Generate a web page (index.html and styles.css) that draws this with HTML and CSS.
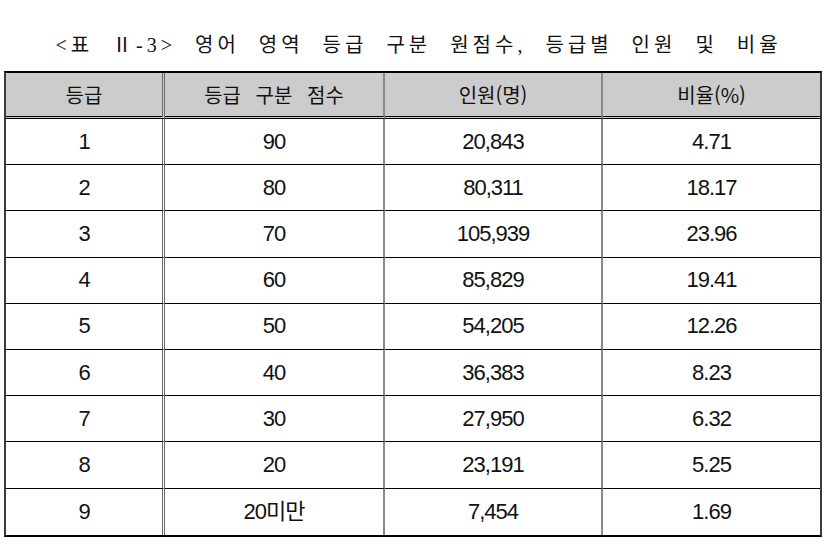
FILE: index.html
```html
<!DOCTYPE html>
<html lang="ko">
<head>
<meta charset="utf-8">
<title>영어 영역 등급 구분 원점수</title>
<link rel="stylesheet" href="styles.css">
</head>
<body>
<div class="page">
  <h1 class="caption">&lt;표 Ⅱ-3&gt; 영어 영역 등급 구분 원점수, 등급별 인원 및 비율</h1>
  <table class="grade-table">
    <colgroup>
      <col class="c1"><col class="c2"><col class="c3"><col class="c4">
    </colgroup>
    <thead>
      <tr>
        <th class="col-a">등급</th>
        <th class="col-b">등급 구분 점수</th>
        <th class="col-c">인원(명)</th>
        <th class="col-d">비율(%)</th>
      </tr>
    </thead>
    <tbody>
      <tr><td class="col-a">1</td><td class="col-b">90</td><td class="col-c">20,843</td><td class="col-d">4.71</td></tr>
      <tr><td class="col-a">2</td><td class="col-b">80</td><td class="col-c">80,311</td><td class="col-d">18.17</td></tr>
      <tr><td class="col-a">3</td><td class="col-b">70</td><td class="col-c">105,939</td><td class="col-d">23.96</td></tr>
      <tr><td class="col-a">4</td><td class="col-b">60</td><td class="col-c">85,829</td><td class="col-d">19.41</td></tr>
      <tr><td class="col-a">5</td><td class="col-b">50</td><td class="col-c">54,205</td><td class="col-d">12.26</td></tr>
      <tr><td class="col-a">6</td><td class="col-b">40</td><td class="col-c">36,383</td><td class="col-d">8.23</td></tr>
      <tr><td class="col-a">7</td><td class="col-b">30</td><td class="col-c">27,950</td><td class="col-d">6.32</td></tr>
      <tr><td class="col-a">8</td><td class="col-b">20</td><td class="col-c">23,191</td><td class="col-d">5.25</td></tr>
      <tr class="last"><td class="col-a">9</td><td class="col-b">20미만</td><td class="col-c">7,454</td><td class="col-d">1.69</td></tr>
    </tbody>
  </table>
</div>
</body>
</html>
```
FILE: styles.css
```css
html, body {
  margin: 0;
  padding: 0;
  background: #ffffff;
}

.page {
  width: 837px;
  height: 547px;
  padding-left: 4px;
  box-sizing: border-box;
}

.caption {
  margin: 0;
  padding-top: 33px;
  height: 71px;
  box-sizing: border-box;
  padding-right: 4px;
  font-family: "Liberation Serif", "Noto Sans CJK KR", serif;
  font-weight: normal;
  font-size: 20px;
  line-height: 24px;
  letter-spacing: 4px;
  word-spacing: 10px;
  color: #111;
  text-align: center;
  white-space: nowrap;
}

.grade-table {
  width: 818px;
  table-layout: fixed;
  border-collapse: separate;
  border-spacing: 0;
  border-top: 2px solid #000;
  border-bottom: 2px solid #000;
  border-left: 2px solid #3a3a3a;
  border-right: 2px solid #3a3a3a;
}

.c1 { width: 159px; }
.c2 { width: 220px; }
.c3 { width: 218px; }
.c4 { width: 217px; }

.grade-table th,
.grade-table td {
  padding: 0;
  text-align: center;
  vertical-align: middle;
  box-sizing: border-box;
  color: #111;
}

.grade-table th {
  height: 46px;
  background: #cccccc;
  font-family: "Noto Sans CJK KR", "Liberation Sans", sans-serif;
  font-weight: normal;
  font-size: 20px;
  line-height: 24px;
  word-spacing: 9px;
  border-bottom: 3px double #000;
}

.grade-table td {
  height: 46.2px;
  font-family: "Liberation Sans", "Noto Sans CJK KR", sans-serif;
  font-size: 22px;
  letter-spacing: -1px;
  line-height: 24px;
  border-bottom: 1px solid #000;
}

.grade-table tr.last td {
  border-bottom: none;
}

.col-a { border-right: 3px double #6a6a6a; }
.col-b { border-right: 2px solid #8a8a8a; }
.col-c { border-right: 2px solid #8a8a8a; }
.col-d { border-right: none; }
```
